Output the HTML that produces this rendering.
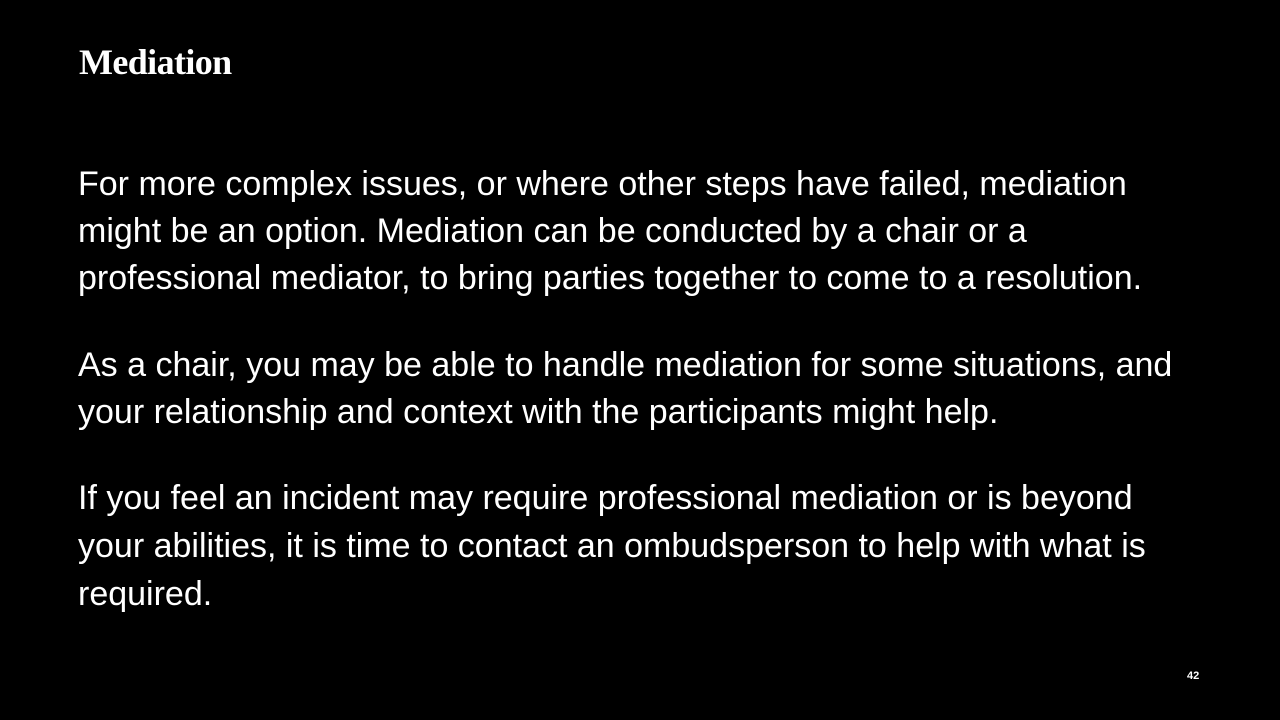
<!DOCTYPE html>
<html><head><meta charset="utf-8"><style>
html,body{margin:0;padding:0;background:#000;}
body{width:1280px;height:720px;position:relative;overflow:hidden;color:#fff;}
.t{position:absolute;left:79px;top:41px;font-family:"Liberation Serif",serif;font-weight:bold;font-size:36px;letter-spacing:-0.6px;}
.l{position:absolute;left:78px;font-family:"Liberation Sans",sans-serif;font-size:34px;white-space:nowrap;line-height:47px;}
.n{position:absolute;left:1187px;top:670px;font-family:"Liberation Sans",sans-serif;font-weight:bold;font-size:11px;}
</style></head><body>
<div class="t">Mediation</div>
<div class="l" style="top:161px">For more complex issues, or where other steps have failed, mediation</div>
<div class="l" style="top:208px">might be an option. Mediation can be conducted by a chair or a</div>
<div class="l" style="top:255px">professional mediator, to bring parties together to come to a resolution.</div>
<div class="l" style="top:342px">As a chair, you may be able to handle mediation for some situations, and</div>
<div class="l" style="top:389px">your relationship and context with the participants might help.</div>
<div class="l" style="top:475px">If you feel an incident may require professional mediation or is beyond</div>
<div class="l" style="top:523px">your abilities, it is time to contact an ombudsperson to help with what is</div>
<div class="l" style="top:571px">required.</div>
<div class="n">42</div>
</body></html>
